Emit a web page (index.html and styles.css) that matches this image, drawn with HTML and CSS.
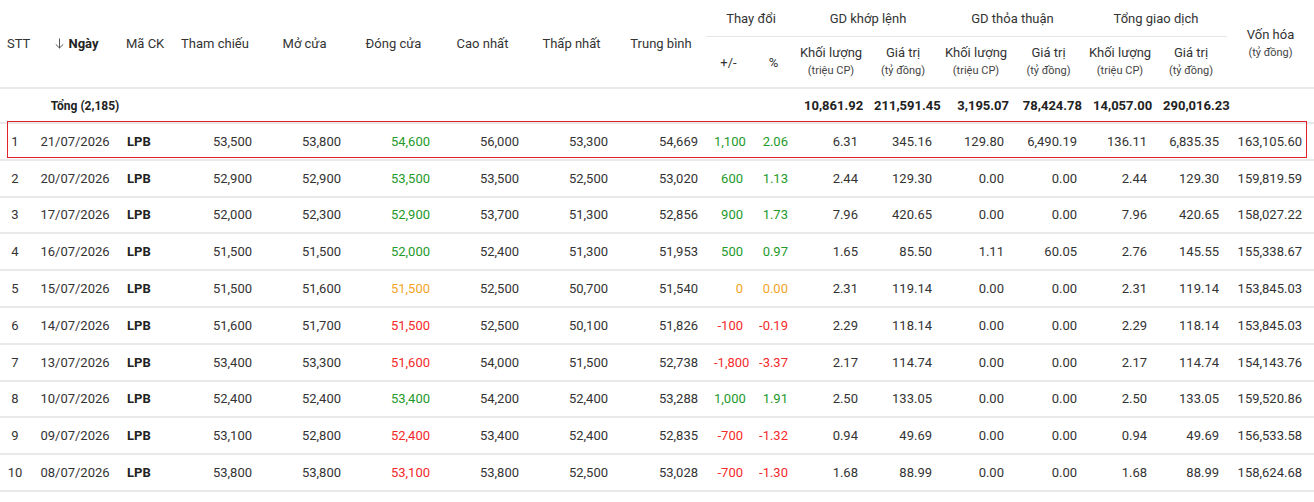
FILE: index.html
```html
<!DOCTYPE html>
<html lang="vi">
<head>
<meta charset="utf-8">
<title>Lịch sử giá LPB</title>
<link rel="stylesheet" href="styles.css">
</head>
<body>
<div class="wrap">
<table class="grid">
  <colgroup>
    <col style="width:30px"><col style="width:90px"><col style="width:50px"><col style="width:90px">
    <col style="width:89px"><col style="width:89px"><col style="width:89px"><col style="width:89px">
    <col style="width:90px"><col style="width:45px"><col style="width:45px"><col style="width:70px">
    <col style="width:74px"><col style="width:72px"><col style="width:73px"><col style="width:70px">
    <col style="width:72px"><col style="width:87px">
  </colgroup>
  <thead>
    <tr class="h1">
      <th rowspan="2" class="stt-h">STT</th>
      <th rowspan="2"><span class="sort"><svg class="arrow" width="9" height="11" viewBox="0 0 9 11"><path d="M4.5 0.5V10M0.8 6.4L4.5 10L8.2 6.4" fill="none" stroke="#555" stroke-width="1"/></svg><b>Ngày</b></span></th>
      <th rowspan="2" class="ma-h">Mã CK</th>
      <th rowspan="2">Tham chiếu</th>
      <th rowspan="2">Mở cửa</th>
      <th rowspan="2">Đóng cửa</th>
      <th rowspan="2">Cao nhất</th>
      <th rowspan="2">Thấp nhất</th>
      <th rowspan="2">Trung bình</th>
      <th colspan="2" class="group">Thay đổi</th>
      <th colspan="2" class="group">GD khớp lệnh</th>
      <th colspan="2" class="group">GD thỏa thuận</th>
      <th colspan="2" class="group">Tổng giao dịch</th>
      <th rowspan="2" class="two"><span class="main">Vốn hóa</span><span class="sub">(tỷ đồng)</span></th>
    </tr>
    <tr class="h2">
      <th>+/-</th>
      <th>%</th>
      <th class="two"><span class="main">Khối lượng</span><span class="sub">(triệu CP)</span></th>
      <th class="two"><span class="main">Giá trị</span><span class="sub">(tỷ đồng)</span></th>
      <th class="two"><span class="main">Khối lượng</span><span class="sub">(triệu CP)</span></th>
      <th class="two"><span class="main">Giá trị</span><span class="sub">(tỷ đồng)</span></th>
      <th class="two"><span class="main">Khối lượng</span><span class="sub">(triệu CP)</span></th>
      <th class="two"><span class="main">Giá trị</span><span class="sub">(tỷ đồng)</span></th>
    </tr>
  </thead>
  <tbody>
    <tr class="total">
      <td colspan="3" class="c label">Tổng (2,185)</td>
      <td></td><td></td><td></td><td></td><td></td><td></td><td></td><td></td>
      <td class="n">10,861.92</td><td class="n">211,591.45</td><td class="n">3,195.07</td><td class="n">78,424.78</td><td class="n">14,057.00</td><td class="n">290,016.23</td>
      <td></td>
    </tr>
    <tr>
      <td class="c">1</td><td class="c">21/07/2026</td><td class="ma">LPB</td>
      <td class="n">53,500</td><td class="n">53,800</td><td class="n up">54,600</td><td class="n">56,000</td><td class="n">53,300</td><td class="n">54,669</td>
      <td class="n up">1,100</td><td class="n up">2.06</td>
      <td class="n">6.31</td><td class="n">345.16</td><td class="n">129.80</td><td class="n">6,490.19</td><td class="n">136.11</td><td class="n">6,835.35</td><td class="n last">163,105.60</td>
    </tr>
    <tr>
      <td class="c">2</td><td class="c">20/07/2026</td><td class="ma">LPB</td>
      <td class="n">52,900</td><td class="n">52,900</td><td class="n up">53,500</td><td class="n">53,500</td><td class="n">52,500</td><td class="n">53,020</td>
      <td class="n up">600</td><td class="n up">1.13</td>
      <td class="n">2.44</td><td class="n">129.30</td><td class="n">0.00</td><td class="n">0.00</td><td class="n">2.44</td><td class="n">129.30</td><td class="n last">159,819.59</td>
    </tr>
    <tr>
      <td class="c">3</td><td class="c">17/07/2026</td><td class="ma">LPB</td>
      <td class="n">52,000</td><td class="n">52,300</td><td class="n up">52,900</td><td class="n">53,700</td><td class="n">51,300</td><td class="n">52,856</td>
      <td class="n up">900</td><td class="n up">1.73</td>
      <td class="n">7.96</td><td class="n">420.65</td><td class="n">0.00</td><td class="n">0.00</td><td class="n">7.96</td><td class="n">420.65</td><td class="n last">158,027.22</td>
    </tr>
    <tr>
      <td class="c">4</td><td class="c">16/07/2026</td><td class="ma">LPB</td>
      <td class="n">51,500</td><td class="n">51,500</td><td class="n up">52,000</td><td class="n">52,400</td><td class="n">51,300</td><td class="n">51,953</td>
      <td class="n up">500</td><td class="n up">0.97</td>
      <td class="n">1.65</td><td class="n">85.50</td><td class="n">1.11</td><td class="n">60.05</td><td class="n">2.76</td><td class="n">145.55</td><td class="n last">155,338.67</td>
    </tr>
    <tr>
      <td class="c">5</td><td class="c">15/07/2026</td><td class="ma">LPB</td>
      <td class="n">51,500</td><td class="n">51,600</td><td class="n ref">51,500</td><td class="n">52,500</td><td class="n">50,700</td><td class="n">51,540</td>
      <td class="n ref">0</td><td class="n ref">0.00</td>
      <td class="n">2.31</td><td class="n">119.14</td><td class="n">0.00</td><td class="n">0.00</td><td class="n">2.31</td><td class="n">119.14</td><td class="n last">153,845.03</td>
    </tr>
    <tr>
      <td class="c">6</td><td class="c">14/07/2026</td><td class="ma">LPB</td>
      <td class="n">51,600</td><td class="n">51,700</td><td class="n down">51,500</td><td class="n">52,500</td><td class="n">50,100</td><td class="n">51,826</td>
      <td class="n down">-100</td><td class="n down">-0.19</td>
      <td class="n">2.29</td><td class="n">118.14</td><td class="n">0.00</td><td class="n">0.00</td><td class="n">2.29</td><td class="n">118.14</td><td class="n last">153,845.03</td>
    </tr>
    <tr>
      <td class="c">7</td><td class="c">13/07/2026</td><td class="ma">LPB</td>
      <td class="n">53,400</td><td class="n">53,300</td><td class="n down">51,600</td><td class="n">54,000</td><td class="n">51,500</td><td class="n">52,738</td>
      <td class="n down">-1,800</td><td class="n down">-3.37</td>
      <td class="n">2.17</td><td class="n">114.74</td><td class="n">0.00</td><td class="n">0.00</td><td class="n">2.17</td><td class="n">114.74</td><td class="n last">154,143.76</td>
    </tr>
    <tr>
      <td class="c">8</td><td class="c">10/07/2026</td><td class="ma">LPB</td>
      <td class="n">52,400</td><td class="n">52,400</td><td class="n up">53,400</td><td class="n">54,200</td><td class="n">52,400</td><td class="n">53,288</td>
      <td class="n up">1,000</td><td class="n up">1.91</td>
      <td class="n">2.50</td><td class="n">133.05</td><td class="n">0.00</td><td class="n">0.00</td><td class="n">2.50</td><td class="n">133.05</td><td class="n last">159,520.86</td>
    </tr>
    <tr>
      <td class="c">9</td><td class="c">09/07/2026</td><td class="ma">LPB</td>
      <td class="n">53,100</td><td class="n">52,800</td><td class="n down">52,400</td><td class="n">53,400</td><td class="n">52,400</td><td class="n">52,835</td>
      <td class="n down">-700</td><td class="n down">-1.32</td>
      <td class="n">0.94</td><td class="n">49.69</td><td class="n">0.00</td><td class="n">0.00</td><td class="n">0.94</td><td class="n">49.69</td><td class="n last">156,533.58</td>
    </tr>
    <tr>
      <td class="c">10</td><td class="c">08/07/2026</td><td class="ma">LPB</td>
      <td class="n">53,800</td><td class="n">53,800</td><td class="n down">53,100</td><td class="n">53,800</td><td class="n">52,500</td><td class="n">53,028</td>
      <td class="n down">-700</td><td class="n down">-1.30</td>
      <td class="n">1.68</td><td class="n">88.99</td><td class="n">0.00</td><td class="n">0.00</td><td class="n">1.68</td><td class="n">88.99</td><td class="n last">158,624.68</td>
    </tr>
  </tbody>
</table>
<div class="highlight"></div>
</div>
</body>
</html>
```
FILE: styles.css
```css
html, body {
  margin: 0;
  padding: 0;
  background: #ffffff;
}

.wrap {
  position: relative;
  width: 1314px;
}

.grid {
  width: 1314px;
  table-layout: fixed;
  border-collapse: separate;
  border-spacing: 0;
  font-family: Roboto, "Liberation Sans", Arial, sans-serif;
  font-size: 13px;
  color: #333333;
}

.grid th {
  font-weight: normal;
  text-align: center;
  vertical-align: middle;
  padding: 0 2px;
  white-space: nowrap;
  border-bottom: 2px solid #e9e9e9;
}

.grid .h1 th {
  height: 35px;
}

.grid .h1 th.group {
  border-bottom: 1px solid #e6e6e6;
  padding-top: 1px;
}

.grid .h2 th {
  height: 50px;
}

.grid th.stt-h {
  text-align: left;
  padding-left: 7px;
}

.grid th.ma-h {
  text-align: left;
  padding-left: 6px;
}

.sort {
  display: inline-flex;
  align-items: center;
  gap: 4px;
  padding-left: 4px;
}

.sort b {
  font-weight: bold;
  color: #222222;
}

.arrow {
  display: block;
}

.two .main {
  display: block;
  line-height: 18px;
}

.two .sub {
  display: block;
  font-size: 11px;
  line-height: 18px;
  color: #444444;
}

.grid td {
  height: 34.8px;
  padding: 0 8px;
  border-bottom: 2px solid #e9e9e9;
  white-space: nowrap;
  vertical-align: middle;
}

.grid td.c {
  text-align: center;
  padding: 0 2px;
}

.grid td.n {
  text-align: right;
}

.grid td.last {
  padding-right: 12px;
}

.grid td.ma {
  text-align: left;
  padding-left: 7px;
  font-weight: bold;
  color: #222222;
}

.grid tr.total td {
  height: 33px;
  font-weight: bold;
  color: #222222;
}

.grid tr.total td.n {
  padding-right: 3px;
}

.grid tr.total td.label {
  font-size: 12px;
}

.up {
  color: #1e9a2a;
}

.down {
  color: #f42a2a;
}

.ref {
  color: #f5a41f;
}

.highlight {
  position: absolute;
  top: 121px;
  left: 7px;
  width: 1298px;
  height: 35px;
  border: 1px solid #e0202a;
  pointer-events: none;
}
```
